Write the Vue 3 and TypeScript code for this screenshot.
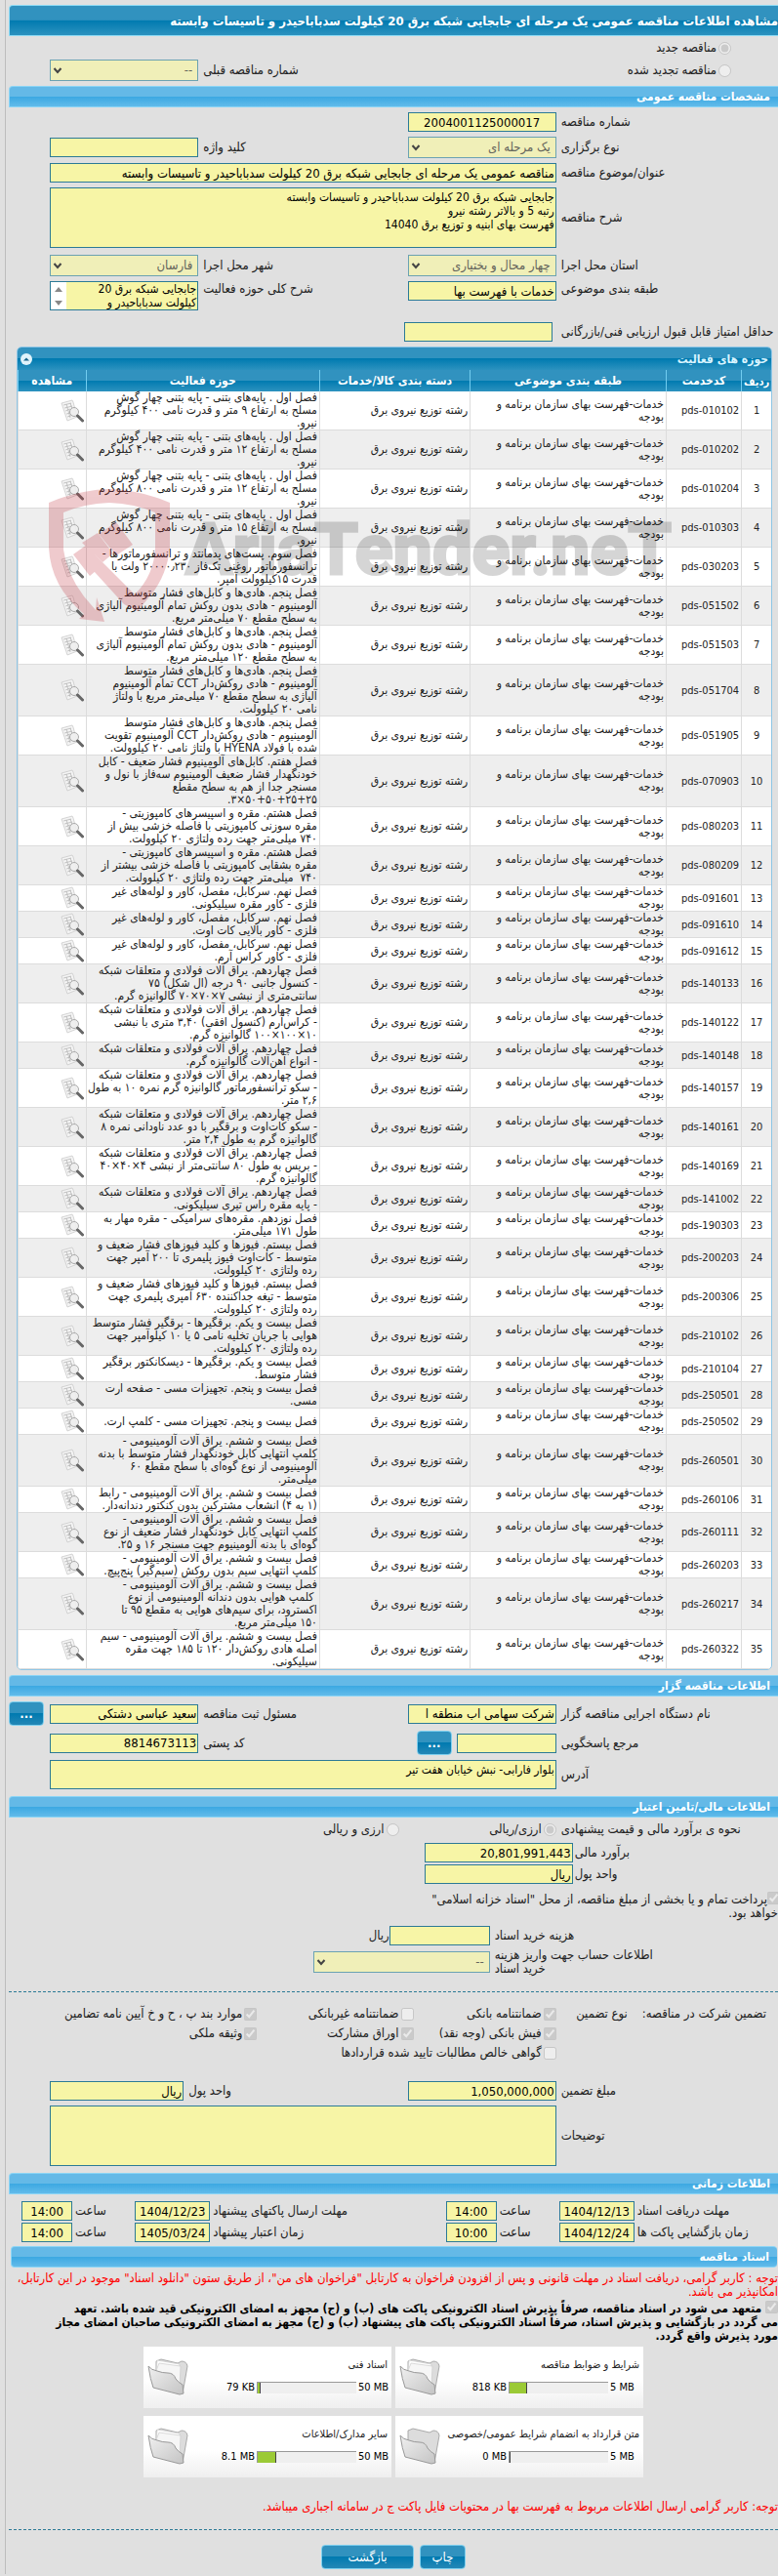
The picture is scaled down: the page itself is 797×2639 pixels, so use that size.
<script setup lang="ts">
interface Activity {
  code: string
  text: string
}

interface DocumentCard {
  title: string
  limit: string
  used: string
  percent: number
  filled: boolean
}

const title = 'مشاهده اطلاعات مناقصه عمومی یک مرحله ای جابجایی شبکه برق 20 کیلولت سدباباحیدر و تاسیسات وابسته'
const subject = 'مناقصه عمومی یک مرحله ای جابجایی شبکه برق 20 کیلولت سدباباحیدر و تاسیسات وابسته'
const description = 'جابجایی شبکه برق 20 کیلولت سدباباحیدر و تاسیسات وابسته\nرتبه 5 و بالاتر رشته نیرو\nفهرست بهای ابنیه و توزیع برق 14040'
const scope = 'جابجایی شبکه برق 20\nکیلولت سدباباحیدر و'
const category = 'خدمات-فهرست بهای سازمان برنامه و\nبودجه'
const address = 'بلوار فارابی- نبش خیابان هفت تیر'

const activities: Activity[] = [
  { code: 'pds-010102', text: 'فصل اول . پایه‌های بتنی - پایه بتنی چهار گوش\nمسلح به ارتفاع ۹ متر و قدرت نامی ۴۰۰ کیلوگرم\nنیرو.' },
  { code: 'pds-010202', text: 'فصل اول . پایه‌های بتنی - پایه بتنی چهار گوش\nمسلح به ارتفاع ۱۲ متر و قدرت نامی ۴۰۰ کیلوگرم\nنیرو.' },
  { code: 'pds-010204', text: 'فصل اول . پایه‌های بتنی - پایه بتنی چهار گوش\nمسلح به ارتفاع ۱۲ متر و قدرت نامی ۸۰۰ کیلوگرم\nنیرو.' },
  { code: 'pds-010303', text: 'فصل اول . پایه‌های بتنی - پایه بتنی چهار گوش\nمسلح به ارتفاع ۱۵ متر و قدرت نامی ۸۰۰ کیلوگرم\nنیرو.' },
  { code: 'pds-030203', text: 'فصل سوم. پست‌های پدمانتد و ترانسفورماتورها -\nترانسفورماتور روغنی تک‌فاز ۲۰۰۰۰٫۲۳۰ ولت با\nقدرت ۱۵کیلوولت آمپر.' },
  { code: 'pds-051502', text: 'فصل پنجم. هادی‌ها و کابل‌های فشار متوسط\nآلومینیوم - هادی بدون روکش تمام آلومینیوم آلیاژی\nبه سطح مقطع ۷۰ میلی‌متر مربع.' },
  { code: 'pds-051503', text: 'فصل پنجم. هادی‌ها و کابل‌های فشار متوسط\nآلومینیوم - هادی بدون روکش تمام آلومینیوم آلیاژی\nبه سطح مقطع ۱۲۰ میلی‌متر مربع.' },
  { code: 'pds-051704', text: 'فصل پنجم. هادی‌ها و کابل‌های فشار متوسط\nآلومینیوم - هادی روکش‌دار CCT تمام آلومینیوم\nآلیاژی به سطح مقطع ۷۰ میلی‌متر مربع با ولتاژ\nنامی ۲۰ کیلوولت.' },
  { code: 'pds-051905', text: 'فصل پنجم. هادی‌ها و کابل‌های فشار متوسط\nآلومینیوم - هادی روکش‌دار CCT آلومینیوم تقویت\nشده با فولاد HYENA با ولتاژ نامی ۲۰ کیلوولت.' },
  { code: 'pds-070903', text: 'فصل هفتم. کابل‌های آلومینیوم فشار ضعیف - کابل\nخودنگهدار فشار ضعیف آلومینیوم سه‌فاز با نول و\nمسنجر جدا از هم به سطح مقطع\n‎.۳×۵۰+۵۰+۲۵+۲۵' },
  { code: 'pds-080203', text: 'فصل هشتم. مقره و اسپیسرهای کامپوزیتی -\nمقره سوزنی کامپوزیتی با فاصله خزشی بیش از\n۷۴۰ میلی‌متر جهت رده ولتاژی ۲۰ کیلوولت.' },
  { code: 'pds-080209', text: 'فصل هشتم. مقره و اسپیسرهای کامپوزیتی -\nمقره بشقابی کامپوزیتی با فاصله خزشی بیشتر از\n۷۴۰  میلی‌متر جهت رده ولتاژی ۲۰ کیلوولت.' },
  { code: 'pds-091601', text: 'فصل نهم. سرکابل، مفصل، کاور و لوله‌های غیر\nفلزی - کاور مقره سیلیکونی.' },
  { code: 'pds-091610', text: 'فصل نهم. سرکابل، مفصل، کاور و لوله‌های غیر\nفلزی - کاور بالایی کات اوت.' },
  { code: 'pds-091612', text: 'فصل نهم. سرکابل، مفصل، کاور و لوله‌های غیر\nفلزی - کاور کراس آرم.' },
  { code: 'pds-140133', text: 'فصل چهاردهم. یراق آلات فولادی و متعلقات شبکه\n- کنسول جانبی ۹۰ درجه (ال شکل) ۷۵\nسانتی‌متری از نبشی ۷×۷۰×۷۰ گالوانیزه گرم.' },
  { code: 'pds-140122', text: 'فصل چهاردهم. یراق آلات فولادی و متعلقات شبکه\n- کراس‌آرم (کنسول افقی) ۳,۴۰ متری با نبشی\n۱۰×۱۰۰×۱۰۰ گالوانیزه گرم.' },
  { code: 'pds-140148', text: 'فصل چهاردهم. یراق آلات فولادی و متعلقات شبکه\n- انواع آهن‌آلات گالوانیزه گرم.' },
  { code: 'pds-140157', text: 'فصل چهاردهم. یراق آلات فولادی و متعلقات شبکه\n- سکو ترانسفورماتور گالوانیزه گرم نمره ۱۰ به طول\n۲,۶ متر.' },
  { code: 'pds-140161', text: 'فصل چهاردهم. یراق آلات فولادی و متعلقات شبکه\n- سکو کات‌اوت و برقگیر با دو عدد ناودانی نمره ۸\nگالوانیزه گرم به طول ۲,۴ متر.' },
  { code: 'pds-140169', text: 'فصل چهاردهم. یراق آلات فولادی و متعلقات شبکه\n- بریس به طول ۸۰ سانتی‌متر از نبشی ۴×۴۰×۴۰\nگالوانیزه گرم.' },
  { code: 'pds-141002', text: 'فصل چهاردهم. یراق آلات فولادی و متعلقات شبکه\n- پایه مقره راس تیری سیلیکونی.' },
  { code: 'pds-190303', text: 'فصل نوزدهم. مقره‌های سرامیکی - مقره مهار به\nطول ۱۷۱ میلی‌متر.' },
  { code: 'pds-200203', text: 'فصل بیستم. فیوزها و کلید فیوزهای فشار ضعیف و\nمتوسط - کات‌اوت فیوز پلیمری تا ۲۰۰ آمپر جهت\nرده ولتاژی ۲۰ کیلوولت.' },
  { code: 'pds-200306', text: 'فصل بیستم. فیوزها و کلید فیوزهای فشار ضعیف و\nمتوسط - تیغه جداکننده ۶۳۰ آمپری پلیمری جهت\nرده ولتاژی ۲۰ کیلوولت.' },
  { code: 'pds-210102', text: 'فصل بیست و یکم. برقگیرها - برقگیر فشار متوسط\nهوایی با جریان تخلیه نامی ۵ یا ۱۰ کیلوآمپر جهت\nرده ولتاژی ۲۰ کیلوولت.' },
  { code: 'pds-210104', text: 'فصل بیست و یکم. برقگیرها - دیسکانکتور برقگیر\nفشار متوسط.' },
  { code: 'pds-250501', text: 'فصل بیست و پنجم. تجهیزات مسی - صفحه ارت\nمسی.' },
  { code: 'pds-250502', text: 'فصل بیست و پنجم. تجهیزات مسی - کلمپ ارت.' },
  { code: 'pds-260501', text: 'فصل بیست و ششم. یراق آلات آلومینیومی -\nکلمپ انتهایی کابل خودنگهدار فشار متوسط با بدنه\nآلومینیومی از نوع گوه‌ای با سطح مقطع ۶۰\nمیلی‌متر.' },
  { code: 'pds-260106', text: 'فصل بیست و ششم. یراق آلات آلومینیومی - رابط\n(۱ به ۴) انشعاب مشترکین بدون کنکتور دندانه‌دار.' },
  { code: 'pds-260111', text: 'فصل بیست و ششم. یراق آلات آلومینیومی -\nکلمپ انتهایی کابل خودنگهدار فشار ضعیف از نوع\nگوه‌ای با بدنه آلومینیوم جهت مسنجر ۱۶ و ۲۵.' },
  { code: 'pds-260203', text: 'فصل بیست و ششم. یراق آلات آلومینیومی -\nکلمپ انتهایی سیم بدون روکش (سیم‌گیر) پنج‌پیچ.' },
  { code: 'pds-260217', text: 'فصل بیست و ششم. یراق آلات آلومینیومی -\n کلمپ هوایی بدون دندانه آلومینیومی از نوع\nاکسترود، برای سیم‌های هوایی به مقطع ۹۵ تا\n۱۵۰ میلی‌متر مربع.' },
  { code: 'pds-260322', text: 'فصل بیست و ششم. یراق آلات آلومینیومی - سیم\nاصله هادی روکش‌دار ۱۲۰ تا ۱۸۵ جهت مقره\nسیلیکونی.' },
]

const documents: DocumentCard[] = [
  { title: 'شرایط و ضوابط مناقصه', limit: '5 MB', used: '818 KB', percent: 17, filled: true },
  { title: 'اسناد فنی', limit: '50 MB', used: '79 KB', percent: 2, filled: true },
  { title: 'متن قرارداد به انضمام شرایط عمومی/خصوصی', limit: '5 MB', used: '0 MB', percent: 0, filled: false },
  { title: 'سایر مدارک/اطلاعات', limit: '50 MB', used: '8.1 MB', percent: 18, filled: true },
]

const guarantees = [
  { label: 'ضمانتنامه بانکی', checked: true },
  { label: 'ضمانتنامه غیربانکی', checked: false },
  { label: 'موارد بند پ ، ح و خ آیین نامه تضامین', checked: true },
  { label: 'فیش بانکی (وجه نقد)', checked: true },
  { label: 'اوراق مشارکت', checked: true },
  { label: 'وثیقه ملکی', checked: true },
  { label: 'گواهی خالص مطالبات تایید شده قراردادها', checked: false },
]

const deadlines = [
  { label: 'مهلت دریافت اسناد', date: '1404/12/13', time: '14:00' },
  { label: 'مهلت ارسال پاکتهای پیشنهاد', date: '1404/12/23', time: '14:00' },
  { label: 'زمان بازگشایی پاکت ها', date: '1404/12/24', time: '10:00' },
  { label: 'زمان اعتبار پیشنهاد', date: '1405/03/24', time: '14:00' },
]
</script>

<template>
  <main class="page" dir="rtl">
    <h1 class="title-bar">{{ title }}</h1>

    <div class="origin">
      <label class="radio"><input type="radio" name="origin" checked disabled>مناقصه جدید</label>
      <div class="row">
        <label class="radio"><input type="radio" name="origin" disabled>مناقصه تجدید شده</label>
        <span></span>
        <label class="lbl" for="previous">شماره مناقصه قبلی</label>
        <div class="pick">
          <select id="previous" disabled><option>--</option></select>
          <svg viewBox="0 0 10 8"><path d="M1.500 2l3.500 4 3.500-4" /></svg>
        </div>
      </div>
    </div>

    <h2 class="bar">مشخصات مناقصه عمومی</h2>
    <section class="form">
      <div class="row">
        <label class="lbl" for="number">شماره مناقصه</label>
        <input id="number" class="centered" value="2004001125000017" readonly>
      </div>
      <div class="row">
        <label class="lbl" for="kind">نوع برگزاری</label>
        <div class="pick">
          <select id="kind" disabled><option>یک مرحله ای</option></select>
          <svg viewBox="0 0 10 8"><path d="M1.500 2l3.500 4 3.500-4" /></svg>
        </div>
        <label class="lbl" for="keyword">کلید واژه</label>
        <input id="keyword" readonly>
      </div>
      <div class="row">
        <label class="lbl" for="subject">عنوان/موضوع مناقصه</label>
        <input id="subject" class="wide" :value="subject" readonly>
      </div>
      <div class="row">
        <label class="lbl" for="description">شرح مناقصه</label>
        <textarea id="description" class="wide tall" :value="description" readonly></textarea>
      </div>
      <div class="row places">
        <label class="lbl" for="province">استان محل اجرا</label>
        <div class="pick">
          <select id="province" disabled><option>چهار محال و بختیاری</option></select>
          <svg viewBox="0 0 10 8"><path d="M1.500 2l3.500 4 3.500-4" /></svg>
        </div>
        <label class="lbl" for="city">شهر محل اجرا</label>
        <div class="pick">
          <select id="city" disabled><option>فارسان</option></select>
          <svg viewBox="0 0 10 8"><path d="M1.500 2l3.500 4 3.500-4" /></svg>
        </div>
      </div>
      <div class="row top">
        <label class="lbl" for="class">طبقه بندی موضوعی</label>
        <input id="class" value="خدمات با فهرست بها" readonly>
        <label class="lbl" for="scope">شرح کلی حوزه فعالیت</label>
        <div class="scroller">
          <textarea id="scope" :value="scope" readonly></textarea>
          <svg viewBox="0 0 16 28"><path d="M8 5l4 5H4zM8 24l4-5H4z" /></svg>
        </div>
      </div>
      <div class="row score">
        <label class="lbl" for="score">حداقل امتیاز قابل قبول ارزیابی فنی/بازرگانی</label>
        <input id="score" readonly>
      </div>
    </section>

    <section class="panel">
      <header class="panel-head">
        <h3>حوزه های فعالیت</h3>
        <button type="button" class="collapse" aria-label="جمع کردن">
          <svg viewBox="0 0 12 12"><circle cx="6" cy="6" r="6" /><path d="M3 7.500l3-3 3 3z" /></svg>
        </button>
      </header>
      <table>
        <colgroup>
          <col class="c-index"><col class="c-code"><col class="c-category"><col class="c-group"><col class="c-text"><col class="c-view">
        </colgroup>
        <thead>
          <tr>
            <th class="low">ردیف</th><th>کدخدمت</th><th>طبقه بندی موضوعی</th><th>دسته بندی کالا/خدمات</th><th>حوزه فعالیت</th><th>مشاهده</th>
          </tr>
        </thead>
        <tbody>
          <tr v-for="(item, i) in activities" :key="item.code">
            <td class="index">{{ i + 1 }}</td>
            <td class="code">{{ item.code }}</td>
            <td class="lines">{{ category }}</td>
            <td>رشته توزیع نیروی برق</td>
            <td class="lines">{{ item.text }}</td>
            <td class="view">
              <button type="button" aria-label="مشاهده">
                <svg viewBox="0 0 24 24">
                  <path class="sheet" d="M1 4l11-3 1 2 4 15-10 4z" />
                  <path class="text-line" d="M3 6l8-2M4 9l8-2M5 12l5-2M6 15l4-1M7 18l6-2M6 5l4 14M10 4l2 6" />
                  <circle class="lens" cx="14" cy="13" r="4.500" />
                  <path class="handle" d="M17.500 17l5 5" />
                </svg>
              </button>
            </td>
          </tr>
        </tbody>
      </table>
      <div class="watermark" dir="ltr">
        <svg viewBox="0 0 124 137">
          <path fill-rule="evenodd" d="M0 14Q30 1 62 0Q94 1 124 14V60Q121 88 105 108L91 125L77 118L36 73L45 65L88 108Q108 88 109 60V24Q88 15 62 14Q36 15 15 24V62Q18 86 36 110L48 124L49 111L57 136L31 133L36 128Q2 100 0 60Z" />
          <path d="M25 67l14-10 16 21-13 11zM34 55l16-10 16 21-11 9zM51 46l18-12 17 23-17 11z" />
        </svg>
        <span>AriaTender.neT</span>
      </div>
    </section>

    <h2 class="bar">اطلاعات مناقصه گزار</h2>
    <section class="form">
      <div class="row owner">
        <label class="lbl" for="agency">نام دستگاه اجرایی مناقصه گزار</label>
        <input id="agency" value="شرکت سهامی اب منطقه ا" readonly>
        <label class="lbl" for="officer">مسئول ثبت مناقصه</label>
        <input id="officer" value="سعید عباسی دشتکی" readonly>
        <button type="button" class="btn more">...</button>
      </div>
      <div class="row owner">
        <label class="lbl" for="contact">مرجع پاسخگویی</label>
        <div class="with-button">
          <input id="contact" readonly>
          <button type="button" class="btn more">...</button>
        </div>
        <label class="lbl" for="postal">کد پستی</label>
        <input id="postal" class="num" value="8814673113" readonly>
      </div>
      <div class="row">
        <label class="lbl" for="address">آدرس</label>
        <textarea id="address" class="wide address" :value="address" readonly></textarea>
      </div>
    </section>

    <h2 class="bar finance-bar">اطلاعات مالی/تامین اعتبار</h2>
    <section class="finance">
      <div class="currency">
        <span class="lbl">نحوه ی برآورد مالی و قیمت پیشنهادی</span>
        <label><input type="radio" name="currency" checked disabled>ارزی/ریالی</label>
        <label><input type="radio" name="currency" disabled>ارزی و ریالی</label>
      </div>
      <div class="budget">
        <label class="lbl" for="budget">برآورد مالی</label>
        <input id="budget" class="num" value="20,801,991,443" readonly>
        <label class="lbl" for="unit">واحد پول</label>
        <input id="unit" value="ریال" readonly>
      </div>
      <label class="treasury"><input type="checkbox" checked disabled>پرداخت تمام و یا بخشی از مبلغ مناقصه، از محل "اسناد خزانه اسلامی"<br>خواهد بود.</label>
      <div class="cost">
        <label class="lbl" for="cost">هزینه خرید اسناد</label>
        <div class="amount"><input id="cost" readonly><span>ریال</span></div>
        <label class="lbl" for="account"><span class="block">اطلاعات حساب جهت واریز هزینه<br>خرید اسناد</span></label>
        <div class="pick">
          <select id="account" disabled><option>--</option></select>
          <svg viewBox="0 0 10 8"><path d="M1.500 2l3.500 4 3.500-4" /></svg>
        </div>
      </div>
    </section>

    <hr>

    <section class="guarantee">
      <span>تضمین شرکت در مناقصه:</span>
      <span class="kind">نوع تضمین</span>
      <label v-for="g in guarantees" :key="g.label"><input type="checkbox" :checked="g.checked" disabled>{{ g.label }}</label>
    </section>
    <section class="form deposit">
      <div class="row">
        <label class="lbl" for="deposit">مبلغ تضمین</label>
        <input id="deposit" class="num" value="1,050,000,000" readonly>
        <label class="lbl" for="deposit-unit">واحد پول</label>
        <input id="deposit-unit" value="ریال" readonly>
      </div>
      <div class="row">
        <label class="lbl" for="notes">توضیحات</label>
        <textarea id="notes" class="wide tall" readonly></textarea>
      </div>
    </section>

    <h2 class="bar">اطلاعات زمانی</h2>
    <section class="deadlines">
      <template v-for="(d, i) in deadlines" :key="d.label">
        <label class="lbl" :for="`date-${i}`">{{ d.label }}</label>
        <input :id="`date-${i}`" :value="d.date" readonly>
        <label class="lbl" :for="`time-${i}`">ساعت</label>
        <input :id="`time-${i}`" :value="d.time" readonly>
      </template>
    </section>

    <h2 class="bar docs-bar">اسناد مناقصه</h2>
    <p class="warning">توجه : کاربر گرامی، دریافت اسناد در مهلت قانونی و پس از افزودن فراخوان به کارتابل "فراخوان های من"، از طریق ستون "دانلود اسناد" موجود در این کارتابل،<br>امکانپذیر می باشد.</p>
    <label class="pledge"><input type="checkbox" checked disabled> متعهد می شود در اسناد مناقصه، صرفاً پذیرش اسناد الکترونیکی پاکت های (ب) و (ج) مجهز به امضای الکترونیکی قید شده باشد. تعهد<br>می گردد در بازگشایی و پذیرش اسناد، صرفاً اسناد الکترونیکی پاکت های پیشنهاد (ب) و (ج) مجهز به امضای الکترونیکی صاحبان امضای مجاز<br>مورد پذیرش واقع گردد.</label>

    <div class="cards">
      <article v-for="doc in documents" :key="doc.title" class="card">
        <svg class="folder" viewBox="0 0 42 38">
          <defs>
            <linearGradient id="folder-front" x1="0" y1="0" x2="1" y2="1"><stop offset="0" stop-color="#f0f0f0" /><stop offset="1" stop-color="#c4c4c4" /></linearGradient>
          </defs>
          <path d="M9 3l5-2 17 4 4-2q5 0 6 5l-5 28-8-10L9 14z" fill="#dcdcdc" stroke="#aaa" />
          <template v-if="doc.filled">
            <path d="M9 14l1-12 23 4-1 22z" fill="#fff" stroke="#ccc" stroke-width=".7" />
            <path d="M8 15l4-10 22 3-1 20z" fill="#f6f6f6" stroke="#ccc" stroke-width=".7" />
          </template>
          <path d="M1 8Q4 12 10 13Q15 15 21 15Q27 15 29 21Q32 25 36 27L37 36L33 37L6 30Q3 22 1 8Z" fill="url(#folder-front)" stroke="#999" />
        </svg>
        <div class="card-body">
          <h4>{{ doc.title }}</h4>
          <div class="usage">
            <span dir="ltr">{{ doc.limit }}</span>
            <div class="meter"><div class="fill" :style="{ width: doc.percent + '%' }"></div></div>
            <span class="used" dir="ltr">{{ doc.used }}</span>
          </div>
        </div>
      </article>
    </div>

    <p class="warning last">توجه: کاربر گرامی ارسال اطلاعات مربوط به فهرست بها در محتویات فایل پاکت ج در سامانه اجباری میباشد.</p>
    <hr>
    <footer>
      <button type="button" class="btn">چاپ</button>
      <button type="button" class="btn back">بازگشت</button>
    </footer>
  </main>
</template>

<style>
body {
  margin: 0;
  background: #e0e0e0;
}
</style>

<style scoped>
.page {
  box-sizing: border-box;
  margin-left: 5px;
  padding: 5px 0 5px 3px;
  border-left: 1px solid #bdbdbd;
  overflow: hidden;
  color: #222;
  font: 13px/14px "DejaVu Sans Condensed", "DejaVu Sans", sans-serif;
  white-space: nowrap;
}
h1, h2, h3, h4, p {
  margin: 0;
}
input, select, textarea, button {
  box-sizing: border-box;
  min-width: 0;
  margin: 0;
  font: 13px/14px "DejaVu Sans Condensed", "DejaVu Sans", sans-serif;
}
input:not([type]), textarea {
  width: 100%;
  height: 20px;
  padding: 0 1px;
  border: 1px solid #2c7a96;
  border-radius: 0;
  background: #f7f5a6;
  color: #000;
}
textarea {
  display: block;
  resize: none;
  overflow: hidden;
  font-size: 12px;
  padding-top: 2px;
}
input[type="radio"], input[type="checkbox"] {
  flex: none;
  width: 13px;
  height: 13px;
}
.centered {
  text-align: center;
}
.num {
  direction: ltr;
  text-align: right;
}
.pick {
  position: relative;
}
select {
  appearance: none;
  display: block;
  width: 100%;
  height: 22px;
  padding: 0 5px;
  border: 1px solid #6ba2b2;
  border-radius: 0;
  background: #f0efb8;
  color: #64645c;
  opacity: 1;
}
.pick svg {
  position: absolute;
  left: 3px;
  top: 7px;
  width: 10px;
  height: 8px;
  fill: none;
  stroke: #444;
  stroke-width: 2;
}
.title-bar {
  height: 32px;
  box-sizing: border-box;
  border: 1px solid #8edcf6;
  border-right: 0;
  border-radius: 4px 0 0 0;
  background: linear-gradient(#3192bf 0 48%, #007ab0 50%, #2c92bf);
  color: #fff;
  font-size: 13px;
  line-height: 32px;
}
.bar {
  box-sizing: border-box;
  height: 22px;
  padding-right: 8px;
  border: 1px solid #8bd5f6;
  border-right: 0;
  border-radius: 4px 0 0 0;
  background: linear-gradient(#64b9e7 0 48%, #3ba8e2 50%, #62bbea);
  color: #fff;
  font-size: 12px;
  line-height: 20px;
}
.origin {
  padding: 5px 0;
}
.radio {
  display: flex;
  align-items: center;
  height: 14px;
  padding-right: 48px;
}
.radio input {
  margin-left: 2px;
}
.row {
  display: grid;
  grid-template-columns: 227fr 152fr 214fr 152fr 42fr;
  align-items: center;
}
.origin .row {
  margin-top: 5px;
}
.lbl {
  padding-left: 5px;
  text-align: left;
}
.form {
  display: grid;
  gap: 5px;
  padding-top: 5px;
}
.wide {
  grid-column: 2 / 5;
}
.tall {
  height: 62px;
}
.places {
  padding-top: 2px;
}
.top {
  align-items: start;
}
.top .lbl {
  padding-top: 1px;
}
.scroller {
  display: flex;
  height: 30px;
  box-sizing: border-box;
  border: 1px solid #2c7a96;
  background: #fff;
}
.scroller textarea {
  flex: 1;
  height: 28px;
  border: 0;
  padding-top: 0;
}
.scroller svg {
  width: 16px;
  height: 28px;
  fill: #888;
}
.score {
  grid-template-columns: 231fr 152fr 404fr;
  margin-top: 7px;
}
.score .lbl {
  padding-left: 9px;
}
.panel {
  position: relative;
  margin: 5px 6px 5px 8px;
  border: 1px solid #8fc6e6;
  border-radius: 5px;
  overflow: hidden;
  background: #fff;
}
.panel-head {
  display: flex;
  justify-content: space-between;
  align-items: center;
  height: 23px;
  padding: 0 3px;
  background: linear-gradient(#3192bf 0 48%, #007ab0 50%, #2c92bf);
  color: #d8f4ff;
}
.panel-head h3 {
  font-size: 12px;
}
.collapse {
  width: 12px;
  height: 12px;
  padding: 0;
  border: 0;
  background: none;
}
.collapse svg {
  display: block;
  fill: #dff3fb;
}
.collapse path {
  fill: #17638a;
}
table {
  width: 100%;
  table-layout: fixed;
  border-collapse: separate;
  border-spacing: 0;
  font-size: 12px;
  line-height: 13px;
}
.c-index { width: 4%; }
.c-code { width: 10%; }
.c-category { width: 26%; }
.c-group { width: 20%; }
.c-text { width: 31%; }
.c-view { width: 9%; }
thead {
  background: linear-gradient(#3192bf 0 48%, #007ab0 50%, #2c92bf);
  color: #fff;
}
th {
  height: 22px;
  padding: 0;
  border-left: 1px solid #72cdf0;
  font-size: 12px;
}
.low {
  padding-top: 3px;
  height: 19px;
  font-size: 11px;
}
td {
  height: 26px;
  padding: 0 2px;
  border-left: 1px solid #dcdcdc;
  border-bottom: 1px solid #dcdcdc;
}
tbody tr:nth-child(even) {
  background: #eee;
}
.index {
  text-align: center;
}
.index, .code {
  font-size: 11px;
}
.lines {
  white-space: pre;
}
.view {
  text-align: right;
}
.view button {
  display: block;
  width: 24px;
  height: 24px;
  padding: 0;
  border: 0;
  background: none;
}
.view svg {
  display: block;
}
.sheet {
  fill: #f4f4f4;
  stroke: #c4c4c4;
  stroke-width: 0.700;
}
.text-line {
  fill: none;
  stroke: #b0b0b0;
  stroke-width: 0.700;
}
.lens {
  fill: #eee;
  fill-opacity: 0.900;
  stroke: #aaa;
}
.handle {
  stroke: #666;
  stroke-width: 3;
  stroke-linecap: round;
}
.watermark {
  position: absolute;
  left: 32px;
  top: 145px;
  display: flex;
  align-items: flex-start;
  gap: 16px;
  pointer-events: none;
}
.watermark svg {
  width: 124px;
  height: 137px;
  fill: #c2303c;
  opacity: 0.250;
}
.watermark span {
  margin-top: 18px;
  color: #000;
  opacity: 0.160;
  font: bold 72px/90px "Liberation Sans Narrow", Roboto, sans-serif;
  -webkit-text-stroke: 3px #000;
}
.btn {
  height: 25px;
  padding: 0;
  border: 1px solid #7fd0ef;
  border-radius: 4px;
  background: linear-gradient(#3192bf 0 48%, #007ab0 50%, #2487b6);
  color: #fff;
}
.more {
  width: 36px;
  font-weight: bold;
}
.owner {
  height: 25px;
}
.owner > .more {
  justify-self: end;
}
.with-button {
  display: flex;
  align-items: center;
  gap: 5px;
}
.with-button input {
  width: 102px;
}
.address {
  height: 30px;
}
.finance-bar {
  margin-top: 7px;
}
.currency {
  display: grid;
  grid-template-columns: 227fr 161fr 399fr;
  height: 14px;
  margin: 5px 0 7px;
}
.currency label, .guarantee label {
  display: flex;
  align-items: center;
  gap: 2px;
}
.budget {
  display: grid;
  grid-template-columns: 210fr 152fr 425fr;
  gap: 2px 0;
  align-items: center;
}
.budget .lbl {
  grid-column: 1;
  padding-left: 2px;
}
.budget input {
  grid-column: 2;
}
.treasury {
  display: block;
  margin: 8px 0 6px;
}
.treasury input {
  margin-right: -2px;
  vertical-align: -1px;
}
.cost {
  display: grid;
  grid-template-columns: 295fr 180fr 312fr;
  grid-auto-rows: 20px 28px;
  row-gap: 3px;
  align-items: center;
}
.cost .lbl {
  grid-column: 1;
}
.block {
  display: inline-block;
  text-align: left;
}
.amount {
  display: flex;
  align-items: center;
}
.amount input {
  width: 103px;
}
hr {
  height: 0;
  margin: 16px 0 15px;
  border: 0;
  border-top: 1px dashed #2c7a96;
}
.guarantee {
  display: grid;
  grid-template-columns: 139fr 88fr 146fr 160fr 254fr;
  grid-auto-rows: 14px;
  row-gap: 6px;
}
.guarantee span {
  padding-right: 12px;
}
.guarantee .kind {
  padding-right: 15px;
}
.guarantee label:nth-of-type(3n + 1) {
  grid-column: 3;
}
.guarantee label:last-child {
  grid-column: 3 / -1;
}
.deposit {
  margin: 17px 0 7px;
}
.deposit .row:first-child {
  grid-template-columns: 227fr 152fr 229fr 137fr 42fr;
}
.deadlines {
  display: grid;
  grid-template-columns: 147fr 77fr 64fr 52fr 241fr 77fr 64fr 52fr 13fr;
  gap: 2px 0;
  align-items: center;
  padding: 7px 0 4px;
}
.deadlines .lbl {
  padding-left: 3px;
}
.deadlines .lbl:nth-of-type(4n + 1) {
  grid-column: 1;
}
.deadlines input {
  text-align: center;
}
.docs-bar {
  margin: 0 1px 0 2px;
  border-radius: 4px;
}
.warning {
  margin-top: 4px;
  color: #f00;
}
.pledge {
  display: block;
  margin-top: 2px;
  color: #000;
  font-size: 12px;
  font-weight: bold;
}
.pledge input {
  vertical-align: -1px;
}
.cards {
  display: grid;
  grid-template-columns: repeat(2, minmax(0, 1fr));
  gap: 8px 4px;
  width: 65%;
  margin: 4px auto 0;
}
.card {
  display: flex;
  flex-direction: row-reverse;
  align-items: flex-start;
  box-sizing: border-box;
  height: 63px;
  padding: 12px 4px 0;
  background: linear-gradient(#fff 55%, #efefef);
}
.folder {
  flex: none;
  width: 42px;
  height: 38px;
}
.card-body {
  flex: 1;
  min-width: 0;
}
.card h4 {
  font-size: 11px;
  font-weight: normal;
}
.usage {
  display: grid;
  grid-template-columns: 32px 102px 1fr;
  align-items: center;
  height: 14px;
  margin-top: 9px;
  color: #000;
  font-size: 11px;
}
.usage span {
  padding: 0 2px;
  text-align: left;
}
.usage .used {
  text-align: right;
}
.meter {
  display: flex;
  justify-content: flex-end;
  height: 12px;
  box-sizing: border-box;
  border-top: 1px solid #999;
  border-left: 1px solid #999;
  background: #efefef;
}
.fill {
  background: #9bca36;
  border-right: 1px solid #444;
}
.last {
  margin-top: 23px;
}
footer {
  display: flex;
  justify-content: center;
  gap: 6px;
}
footer .btn {
  width: 47px;
}
footer .back {
  width: 95px;
}
</style>
